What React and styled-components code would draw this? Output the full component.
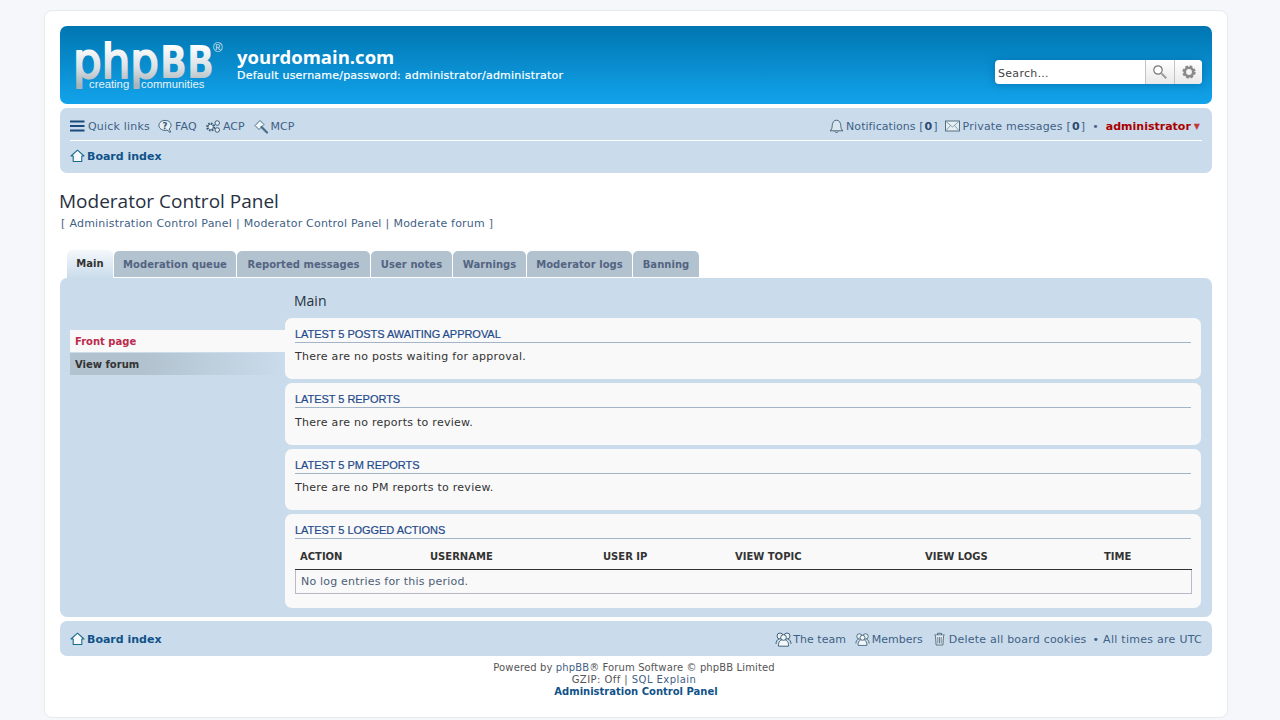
import React from 'react';
import styled, { createGlobalStyle } from 'styled-components';

const GlobalStyle = createGlobalStyle`
  html, body {
    margin: 0;
    padding: 0;
    background: #f5f7fa;
  }
  body {
    font-family: "DejaVu Sans", Verdana, sans-serif;
    font-size: 11px;
    color: #536482;
  }
`;

const Wrap = styled.div`
  box-sizing: border-box;
  width: 1184px;
  height: 708px;
  margin: 10px 0 0 44px;
  padding: 15px;
  background: #fff;
  border: 1px solid #e6e9ed;
  border-radius: 8px;
  overflow: hidden;
`;

const Headerbar = styled.header`
  box-sizing: border-box;
  height: 78px;
  display: flex;
  background: linear-gradient(to bottom, #0076b1 0%, #12a3eb 100%);
  border-radius: 7px;
  color: #fff;
  padding: 15px 10px 0 12px;
`;

const LogoSvg = styled.svg`
  flex: none;
  width: 154px;
  height: 56px;
  margin-right: 11px;
`;

const SiteInfo = styled.div`
  padding-top: 4px;
`;

const SiteName = styled.div`
  font-family: "Open Sans", sans-serif;
  font-weight: 700;
  font-size: 18.5px;
  line-height: 23px;
  margin-bottom: 1px;
`;

const SiteDesc = styled.div`
  font-size: 11px;
  line-height: 13px;
  letter-spacing: 0.22px;
  -webkit-text-stroke: 0.2px #fff;
`;

const SearchBox = styled.div`
  margin: 19px 0 0 auto;
  display: flex;
  width: 207px;
  height: 24px;
  border-radius: 4px;
  overflow: hidden;
  background: #fff;
  box-shadow: 0 0 8px #0075b0;
`;

const SearchInput = styled.div`
  flex: 1;
  padding-left: 3px;
  line-height: 28px;
  font-size: 11px;
  letter-spacing: 0.3px;
  color: #444;
`;

const SearchButton = styled.div`
  width: 28px;
  display: flex;
  align-items: center;
  justify-content: center;
  border-left: 1px solid #c7c3bf;
  background: linear-gradient(to bottom, #ffffff 0%, #e9e9e9 100%);
  &:last-child { width: 27px; }
`;

const Navbar = styled.nav`
  background: #cadceb;
  border-radius: 7px;
  padding: 3px 10px;
  margin-top: 4px;
`;

const NavRow = styled.div`
  box-sizing: border-box;
  display: flex;
  align-items: center;
  padding-top: 1px;
  height: ${p => p.$h}px;
  ${p => p.$line && 'border-bottom: 1px solid #fff;'}
`;

const NavLink = styled.span`
  display: inline-flex;
  align-items: center;
  color: #3f5f86;
  letter-spacing: ${p => p.$ls ?? 0}px;
  margin-right: ${p => p.$mr ?? 7}px;
  white-space: nowrap;
  svg { flex: none; margin-right: ${p => p.$gap ?? 2}px; }
  b { color: #2a4a70; margin: 0 1px; }
`;

const Spacer = styled.div`
  flex: 1;
`;

const Crumb = styled.span`
  display: inline-flex;
  align-items: center;
  font-weight: 700;
  font-size: 11px;
  color: #105289;
  svg { margin-right: 2px; }
`;

const Dot = styled.span`
  margin-right: ${p => p.$mr ?? 5}px;
  color: #536482;
`;

const UserName = styled.span`
  font-weight: 700;
  font-size: 11px;
  color: #aa0000;
`;

const Caret = styled.span`
  color: #bf3b3b;
  font-size: 8px;
  margin: 0 2px 0 3px;
`;

const PageTitle = styled.h2`
  margin: 16px 0 0 -1px;
  font-family: "Open Sans", sans-serif;
  font-weight: 400;
  font-size: 19px;
  line-height: 24px;
  color: #28313f;
`;

const SubLinks = styled.p`
  margin: 3px 0 0 1px;
  line-height: 16px;
  letter-spacing: 0.2px;
  color: #536482;
  span { color: #3f5f86; margin: 0 0.25px; }
`;

const Tabs = styled.ul`
  list-style: none;
  margin: 18px 0 0;
  padding: 0 0 0 7px;
  display: flex;
  gap: 1px;
  align-items: flex-end;
  height: 28px;
`;

const Tab = styled.li`
  box-sizing: border-box;
  width: ${p => p.$w}px;
  text-align: center;
  white-space: nowrap;
  font-weight: 700;
  font-size: 10px;
  letter-spacing: 0.05px;
  line-height: 28px;
  border-radius: 5px 5px 0 0;
  height: ${p => (p.$active ? 28 : 26)}px;
  margin-bottom: ${p => (p.$active ? 0 : 1)}px;
  color: ${p => (p.$active ? '#333' : '#536482')};
  background: ${p => (p.$active
    ? 'linear-gradient(to bottom, #f4f8fb 0%, #cadceb 100%)'
    : '#b2c2cf')};
`;

const Panel = styled.div`
  box-sizing: border-box;
  height: 339px;
  background: #cadceb;
  border-radius: 7px;
  padding: 10px 11px 9px 10px;
  display: flex;
`;

const Sidebar = styled.aside`
  flex: none;
  width: 215px;
  padding-top: 42px;
`;

const SideItem = styled.div`
  height: 22px;
  margin-bottom: 1px;
  padding-left: 5px;
  line-height: 23px;
  font-weight: 700;
  font-size: 10px;
  color: ${p => (p.$active ? '#bc2a4d' : '#333')};
  background: ${p => (p.$active
    ? '#f9f9f9'
    : 'linear-gradient(to right, #b2c2cf 35%, #cadceb 100%)')};
`;

const Main = styled.main`
  flex: 1;
  min-width: 0;
  display: flex;
  flex-direction: column;
  gap: 4px;
`;

const MainTitle = styled.h2`
  margin: 2px 0 3px 9px;
  font-family: "Open Sans", sans-serif;
  font-weight: 400;
  font-size: 14px;
  line-height: 21px;
  color: #28313f;
`;

const Card = styled.section`
  box-sizing: border-box;
  flex: none;
  height: ${p => p.$h}px;
  padding: 10px;
  background: #f9f9f9;
  border-radius: 7px;
  color: #333;
`;

const CardTitle = styled.h3`
  margin: 0;
  height: 14px;
  font-family: "Liberation Sans", Arial, sans-serif;
  font-weight: 400;
  font-size: 11px;
  line-height: 13px;
  letter-spacing: -0.04px;
  color: #1f4a8c;
  border-bottom: 1px solid #a2b4c6;
  -webkit-text-stroke: 0.2px #1f4a8c;
`;

const CardText = styled.p`
  margin: ${p => p.$top ?? 6}px 0 0;
  line-height: 16px;
  letter-spacing: 0.27px;
`;

const LogHead = styled.div`
  display: grid;
  grid-template-columns: 130px 173px 132px 190px 179px 1fr;
  margin: 5px -1px 0 0;
  height: 26px;
  padding-left: 5px;
  align-items: center;
  font-weight: 700;
  font-size: 10px;
  color: #333;
  border-bottom: 1px solid #333;
  box-sizing: border-box;
`;

const LogBody = styled.div`
  box-sizing: border-box;
  margin-right: -1px;
  height: 24px;
  padding-left: 5px;
  line-height: 24px;
  font-size: 11px;
  letter-spacing: 0.2px;
  color: #4c5d77;
  border: 1px solid #b9b9c9;
  border-top: none;
`;

const Copyright = styled.div`
  margin-top: 6px;
  text-align: center;
  font-size: 10px;
  line-height: 12px;
  color: #555;
  span { color: #3f5f86; }
  strong { color: #105289; }
`;

const CopyLine = styled.div`
  letter-spacing: ${p => p.$ls ?? 0}px;
  margin-right: ${p => p.$mr ?? 0}px;
`;

const HomeIcon = () => (
  <svg width="15" height="14" viewBox="0 0 15 14">
    <path d="M7.5 1.2 1 7h2.2v5.5h8.6V7H14z" fill="#f6fafd" stroke="#1b6a8f" strokeWidth="1.1" strokeLinejoin="round" />
  </svg>
);

const BarsIcon = () => (
  <svg width="15" height="12" viewBox="0 0 15 12">
    <path d="M0 1.5h14.5M0 6h14.5M0 10.5h14.5" stroke="#1d4a7c" strokeWidth="2" />
  </svg>
);

const FaqIcon = () => (
  <svg width="15" height="15" viewBox="0 0 16 15">
    <path d="M7.5 1C3.9 1 1 3.2 1 6.3s2.9 5.3 6.5 5.3c.8 0 1.5-.1 2.2-.3l3.3 2.6.5-.8-1.7-2.900c1.300-1 2.100-2.400 2.100-3.900C14 3.200 11.100 1 7.500 1z" fill="#e8f0f6" stroke="#33566f" strokeWidth="1" />
    <text x="7.5" y="9.8" textAnchor="middle" fontSize="9" fontWeight="700" fontFamily="DejaVu Sans" fill="#33566f">?</text>
  </svg>
);

const CogsIcon = () => (
  <svg width="16" height="15" viewBox="0 0 17 15">
    <circle cx="6" cy="8" r="3.6" fill="none" stroke="#33566f" strokeWidth="2.4" strokeDasharray="1.6 1.2" />
    <circle cx="6" cy="8" r="2.8" fill="#e8f0f6" stroke="#33566f" strokeWidth="0.8" />
    <circle cx="13" cy="3.8" r="2.4" fill="#e8f0f6" stroke="#33566f" strokeWidth="1" />
    <circle cx="13" cy="11.2" r="2.4" fill="#e8f0f6" stroke="#33566f" strokeWidth="1" />
  </svg>
);

const GavelIcon = () => (
  <svg width="15" height="15" viewBox="0 0 15 15">
    <path d="M1 6.5 6 1.5l4 4-5 5z" fill="#f0f5f9" stroke="#4a6c85" strokeWidth="1" strokeLinejoin="round" />
    <path d="M7.5 8 13 13.5" stroke="#4a6c85" strokeWidth="2.2" strokeLinecap="round" />
  </svg>
);

const BellIcon = () => (
  <svg width="15" height="16" viewBox="0 0 15 16">
    <path d="M1 12.8c1.6-1 2.1-2.6 2.2-5.2.1-3 1.7-5.400 4.300-5.400s4.200 2.400 4.300 5.400c.1 2.600.6 4.200 2.200 5.200z" fill="#d9e6f0" stroke="#3d5a6e" strokeWidth="0.9" strokeLinejoin="round" />
    <path d="M6 13.5c.2 1.4 2.8 1.4 3 0" fill="none" stroke="#3d5a6e" strokeWidth="0.9" />
  </svg>
);

const MailIcon = () => (
  <svg width="15" height="12" viewBox="0 0 15 12">
    <rect x=".5" y="1" width="14" height="10" fill="#e6eef5" stroke="#55707f" />
    <path d="M1 1.500 7.500 7 14 1.500M1 10.500 5.500 5.500M14 10.500 9.500 5.500" fill="none" stroke="#7d95a3" strokeWidth="0.9" />
  </svg>
);

const TeamIcon = ({ w = 15 }) => (
  <svg width={w} height="15" viewBox="0 0 17 15">
    <circle cx="5" cy="4" r="3" fill="#e8f0f6" stroke="#33566f" strokeWidth="0.9" />
    <circle cx="12" cy="4" r="3" fill="#e8f0f6" stroke="#33566f" strokeWidth="0.9" />
    <path d="M1 12c0-2.500 1.200-4.500 3-5M16 12c0-2.500-1.200-4.500-3-5" fill="none" stroke="#33566f" strokeWidth="0.9" />
    <path d="M3.500 14.200c-.5-3.800 1.800-6.700 5-6.700s5.500 2.900 5 6.700z" fill="#f3f7fa" stroke="#33566f" strokeWidth="0.9" />
    <circle cx="8.500" cy="5.500" r="2.800" fill="#f3f7fa" stroke="#33566f" strokeWidth="0.9" />
  </svg>
);

const TrashIcon = () => (
  <svg width="13" height="14" viewBox="0 0 12 14">
    <path d="M.8 3h10.400M4 3V1.300h4V3" fill="none" stroke="#4a6478" strokeWidth="0.9" />
    <path d="M2 3.500l.6 9.500h6.800L10 3.500" fill="#e8f0f6" stroke="#4a6478" strokeWidth="0.9" />
    <path d="M4.300 5v6.500M6 5v6.500M7.700 5v6.500" stroke="#4a6478" strokeWidth="0.8" />
  </svg>
);

const SearchIcon = () => (
  <svg width="16" height="16" viewBox="0 0 16 16">
    <circle cx="6" cy="6" r="4.200" fill="#fff" stroke="#777" strokeWidth="1.200" />
    <path d="M9.500 9.500 14.300 14.300" stroke="#a0a0a0" strokeWidth="2.200" />
  </svg>
);

const CogIcon = () => (
  <svg width="16" height="16" viewBox="0 0 16 16">
    <circle cx="8" cy="8" r="5.200" fill="none" stroke="#8a8a8a" strokeWidth="3" strokeDasharray="2.400 1.700" />
    <circle cx="8" cy="8" r="4.200" fill="none" stroke="#8a8a8a" strokeWidth="2.600" />
  </svg>
);

const Logo = () => (
  <LogoSvg viewBox="0 0 154 56">
    <defs>
      <linearGradient id="logoFill" gradientUnits="userSpaceOnUse" x1="0" y1="4" x2="0" y2="44">
        <stop offset="0" stopColor="#ffffff" />
        <stop offset="0.55" stopColor="#dce1e4" />
        <stop offset="1" stopColor="#aab4ba" />
      </linearGradient>
    </defs>
    <text x="1" y="37" fontFamily="DejaVu Sans, sans-serif" fontSize="50" textLength="86" lengthAdjust="spacingAndGlyphs" fill="url(#logoFill)" stroke="url(#logoFill)" strokeWidth="2.200" strokeLinejoin="round">php</text>
    <text x="88" y="37" fontFamily="DejaVu Sans, sans-serif" fontWeight="700" fontSize="45" textLength="54" lengthAdjust="spacingAndGlyphs" fill="url(#logoFill)">BB</text>
    <text x="17" y="47" fontFamily="Liberation Sans, sans-serif" fontSize="11.300" fill="#e8f2f8">creating</text>
    <text x="69" y="47" fontFamily="Liberation Sans, sans-serif" fontSize="11.300" fill="#e8f2f8">communities</text>
    <text x="141" y="11" fontFamily="Liberation Sans, sans-serif" fontSize="13" fill="#dfe8ee">®</text>
  </LogoSvg>
);

const sections = [
  { title: 'LATEST 5 POSTS AWAITING APPROVAL', text: 'There are no posts waiting for approval.', h: 61 },
  { title: 'LATEST 5 REPORTS', text: 'There are no reports to review.', h: 62, top: 7 },
  { title: 'LATEST 5 PM REPORTS', text: 'There are no PM reports to review.', h: 61 },
];

const tabs = [
  { label: 'Main', w: 46 },
  { label: 'Moderation queue', w: 122 },
  { label: 'Reported messages', w: 133 },
  { label: 'User notes', w: 81 },
  { label: 'Warnings', w: 73 },
  { label: 'Moderator logs', w: 105 },
  { label: 'Banning', w: 66 },
];
const logCols = ['ACTION', 'USERNAME', 'USER IP', 'VIEW TOPIC', 'VIEW LOGS', 'TIME'];

export default function App() {
  return (
    <>
      <GlobalStyle />
      <Wrap>
        <Headerbar>
          <Logo />
          <SiteInfo>
            <SiteName>yourdomain.com</SiteName>
            <SiteDesc>Default username/password: administrator/administrator</SiteDesc>
          </SiteInfo>
          <SearchBox>
            <SearchInput>Search…</SearchInput>
            <SearchButton><SearchIcon /></SearchButton>
            <SearchButton><CogIcon /></SearchButton>
          </SearchBox>
        </Headerbar>

        <Navbar>
          <NavRow $h={30} $line>
            <NavLink $gap={3} $ls={0.2} $mr={8}><BarsIcon />Quick links</NavLink>
            <NavLink $ls={0.2} $mr={8}><FaqIcon />FAQ</NavLink>
            <NavLink $mr={9}><CogsIcon />ACP</NavLink>
            <NavLink><GavelIcon />MCP</NavLink>
            <Spacer />
            <NavLink $gap={2} $ls={0.05}><BellIcon />Notifications [<b>0</b>]</NavLink>
            <NavLink $gap={3} $ls={0.2}><MailIcon />Private messages [<b>0</b>]</NavLink>
            <Dot $mr={7}>•</Dot>
            <UserName>administrator</UserName>
            <Caret>▼</Caret>
          </NavRow>
          <NavRow $h={29}>
            <Crumb><HomeIcon />Board index</Crumb>
          </NavRow>
        </Navbar>

        <PageTitle>Moderator Control Panel</PageTitle>
        <SubLinks>[ <span>Administration Control Panel</span> | <span>Moderator Control Panel</span> | <span>Moderate forum</span> ]</SubLinks>

        <Tabs>
          {tabs.map((t, i) => <Tab key={t.label} $w={t.w} $active={i === 0}>{t.label}</Tab>)}
        </Tabs>

        <Panel>
          <Sidebar>
            <SideItem $active>Front page</SideItem>
            <SideItem>View forum</SideItem>
          </Sidebar>
          <Main>
            <MainTitle>Main</MainTitle>
            {sections.map(s => (
              <Card key={s.title} $h={s.h}>
                <CardTitle>{s.title}</CardTitle>
                <CardText $top={s.top}>{s.text}</CardText>
              </Card>
            ))}
            <Card $h={94}>
              <CardTitle>LATEST 5 LOGGED ACTIONS</CardTitle>
              <LogHead>
                {logCols.map(c => <span key={c}>{c}</span>)}
              </LogHead>
              <LogBody>No log entries for this period.</LogBody>
            </Card>
          </Main>
        </Panel>

        <Navbar>
          <NavRow $h={29}>
            <Crumb><HomeIcon />Board index</Crumb>
            <Spacer />
            <NavLink $mr={9} $gap={1}><TeamIcon w={17} />The team</NavLink>
            <NavLink $mr={10}><TeamIcon />Members</NavLink>
            <NavLink $gap={3} $ls={0.21} $mr={6}><TrashIcon />Delete all board cookies</NavLink>
            <NavLink $mr={0} $ls={0.27}>• All times are UTC</NavLink>
          </NavRow>
        </Navbar>

        <Copyright>
          <CopyLine $ls={0.12} $mr={4}>Powered by <span>phpBB</span>® Forum Software © phpBB Limited</CopyLine>
          <CopyLine $ls={0.45} $mr={4}>GZIP: Off | <span>SQL Explain</span></CopyLine>
          <CopyLine><strong>Administration Control Panel</strong></CopyLine>
        </Copyright>
      </Wrap>
    </>
  );
}
